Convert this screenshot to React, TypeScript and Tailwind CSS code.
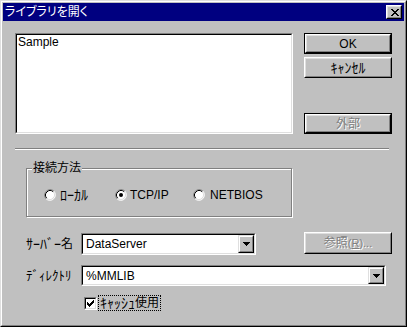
import React from "react";

function CloseGlyph() {
  return (
    <svg width="8" height="7" viewBox="0 0 8 7" shapeRendering="crispEdges">
      <path
        fill="#000"
        d="M0 0h2v1H0zM6 0h2v1H6zM1 1h2v1H1zM5 1h2v1H5zM2 2h4v1H2zM3 3h2v1H3zM2 4h4v1H2zM1 5h2v1H1zM5 5h2v1H5zM0 6h2v1H0zM6 6h2v1H6z"
      />
    </svg>
  );
}

function DownArrow() {
  return (
    <svg width="7" height="4" viewBox="0 0 7 4" shapeRendering="crispEdges">
      <path fill="#000" d="M0 0h7v1H0zM1 1h5v1H1zM2 2h3v1H2zM3 3h1v1H3z" />
    </svg>
  );
}

function CheckGlyph() {
  return (
    <svg width="7" height="7" viewBox="0 0 7 7" shapeRendering="crispEdges">
      <path
        fill="#000"
        d="M6 0h1v3H6zM5 1h1v3H5zM4 2h1v3H4zM3 3h1v3H3zM2 4h1v3H2zM1 3h1v3H1zM0 2h1v3H0z"
      />
    </svg>
  );
}

function Radio({ checked }: { checked?: boolean }) {
  return (
    <svg width="12" height="12" viewBox="0 0 12 12" className="shrink-0">
      <circle cx="6" cy="6" r="5" fill="#fff" />
      <path d="M1.76 10.24 A6 6 0 0 1 10.24 1.76" fill="none" stroke="#808080" strokeWidth="1" transform="translate(6 6) scale(0.92) translate(-6 -6)" />
      <path d="M10.24 1.76 A6 6 0 0 1 1.76 10.24" fill="none" stroke="#fff" strokeWidth="1" transform="translate(6 6) scale(0.92) translate(-6 -6)" />
      <path d="M2.82 9.18 A4.5 4.5 0 0 1 9.18 2.82" fill="none" stroke="#000" strokeWidth="1" />
      <path d="M9.18 2.82 A4.5 4.5 0 0 1 2.82 9.18" fill="none" stroke="#dfdfdf" strokeWidth="1" />
      {checked && <circle cx="6" cy="6" r="2" fill="#000" />}
    </svg>
  );
}

function Kana({ children }: { children: React.ReactNode }) {
  return <span className="text-[14px]">{children}</span>;
}

function Button({
  children,
  isDefault,
  disabled,
  className,
}: {
  children: React.ReactNode;
  isDefault?: boolean;
  disabled?: boolean;
  className: string;
}) {
  const inner = (
    <div className="h-full border border-t-white border-l-white border-r-black border-b-black">
      <div className="h-full border border-t-[#dfdfdf] border-l-[#dfdfdf] border-r-[#808080] border-b-[#808080] flex items-center justify-center">
        <span
          className={
            disabled
              ? "flex items-center text-[#808080] [text-shadow:1px_1px_0_#fff]"
              : "flex items-center text-black"
          }
        >
          {children}
        </span>
      </div>
    </div>
  );
  if (isDefault) {
    return <div className={className + " border border-black"}>{inner}</div>;
  }
  return <div className={className}>{inner}</div>;
}

function Sunken({ className, children }: { className: string; children?: React.ReactNode }) {
  return (
    <div className={className + " border border-t-[#808080] border-l-[#808080] border-r-white border-b-white"}>
      <div className="h-full border border-t-black border-l-black border-r-[#dfdfdf] border-b-[#dfdfdf] bg-white">
        {children}
      </div>
    </div>
  );
}

function Combo({ className, value }: { className: string; value: string }) {
  return (
    <Sunken className={className}>
      <div className="h-full flex items-center">
        <span className="flex-1 pl-[3px] text-[12px]">{value}</span>
        <div className="w-[16px] h-full border border-t-[#dfdfdf] border-l-[#dfdfdf] border-r-black border-b-black bg-[#c0c0c0]">
          <div className="h-full border border-t-white border-l-white border-r-[#808080] border-b-[#808080] flex items-center justify-center">
            <DownArrow />
          </div>
        </div>
      </div>
    </Sunken>
  );
}

export default function App() {
  return (
    <div className="w-[407px] h-[327px] bg-[#c0c0c0] font-['Liberation_Sans','Noto_Sans_CJK_JP',sans-serif] text-[12px] leading-none text-black select-none">
      <div className="h-full border border-t-[#dfdfdf] border-l-[#dfdfdf] border-r-black border-b-black">
        <div className="h-full border border-t-white border-l-white border-r-[#808080] border-b-[#808080] p-px flex flex-col">
          {/* Title bar */}
          <div className="h-[18px] bg-[#000080] flex items-center pl-[2px] pr-[2px]">
            <span className="flex-1 text-white text-[12px] [font-feature-settings:'palt']">
              ライブラリを開く
            </span>
            <div className="w-[16px] h-[14px] bg-[#c0c0c0] border border-t-white border-l-white border-r-black border-b-black">
              <div className="h-full border border-t-[#dfdfdf] border-l-[#dfdfdf] border-r-[#808080] border-b-[#808080] flex items-center justify-center pl-px">
                <CloseGlyph />
              </div>
            </div>
          </div>

          {/* Body */}
          <div className="flex-1 pl-[12px] pt-[12px] flex flex-col">
            {/* list + buttons */}
            <div className="flex">
              <Sunken className="w-[278px] h-[101px]">
                <div className="pl-[1px] pt-[1px] text-[12px] leading-[13px]">Sample</div>
              </Sunken>
              <div className="ml-[11px] w-[88px] flex flex-col">
                <Button className="h-[21px] text-[12px]" isDefault>
                  OK
                </Button>
                <Button className="h-[21px] mt-[3px]">
                  <Kana>ｷｬﾝｾﾙ</Kana>
                </Button>
                <Button className="h-[21px] mt-auto text-[12px]" isDefault disabled>
                  外部
                </Button>
              </div>
            </div>

            {/* separator */}
            <div className="mt-[14px] w-[374px] h-[2px] border-t border-t-[#808080] border-b border-b-white" />

            {/* group box */}
            <div className="mt-[18px] ml-[11px] w-[266px] h-[49px] relative border border-[#808080] shadow-[inset_1px_1px_0_#fff,1px_1px_0_#fff]">
              <span className="absolute left-[5px] top-[-7px] px-[1px] bg-[#c0c0c0] text-[12px] leading-[12px]">
                接続方法
              </span>
              <div className="h-full flex items-center pl-[17px] pt-[4px] text-[12px]">
                <div className="w-[71px] flex items-center gap-[4px]">
                  <Radio />
                  <Kana>ﾛｰｶﾙ</Kana>
                </div>
                <div className="w-[78px] flex items-center gap-[3px]">
                  <Radio checked />
                  <span>TCP/IP</span>
                </div>
                <div className="flex items-center gap-[5px]">
                  <Radio />
                  <span>NETBIOS</span>
                </div>
              </div>
            </div>

            {/* server row */}
            <div className="mt-[15px] flex items-start text-[12px]">
              <div className="ml-[11px] w-[55px] h-[22px] mt-[1px] flex items-center">
                <Kana>ｻｰﾊﾞｰ</Kana>
                <span>名</span>
              </div>
              <Combo className="w-[175px] h-[22px] mt-[1px]" value="DataServer" />
              <Button className="ml-[48px] w-[88px] h-[22px] text-[11px]" disabled>
                <span className="text-[12px]">参照</span>
                <span>
                  (<u>R</u>)...
                </span>
              </Button>
            </div>

            {/* directory row */}
            <div className="mt-[10px] flex items-center text-[12px]">
              <div className="ml-[11px] w-[55px] h-[21px] flex items-center">
                <span className="text-[13px]">ﾃﾞｨﾚｸﾄﾘ</span>
              </div>
              <Combo className="w-[305px] h-[21px]" value="%MMLIB" />
            </div>

            {/* checkbox row */}
            <div className="mt-[9px] ml-[69px] flex items-center h-[16px] text-[12px]">
              <Sunken className="w-[13px] h-[13px]">
                <div className="h-full flex items-center justify-center">
                  <CheckGlyph />
                </div>
              </Sunken>
              <div className="ml-[1px] h-[16px] px-[1px] flex items-center border border-dotted border-black">
                <Kana>ｷｬｯｼｭ</Kana>
                <span>使用</span>
              </div>
            </div>
          </div>
        </div>
      </div>
    </div>
  );
}
